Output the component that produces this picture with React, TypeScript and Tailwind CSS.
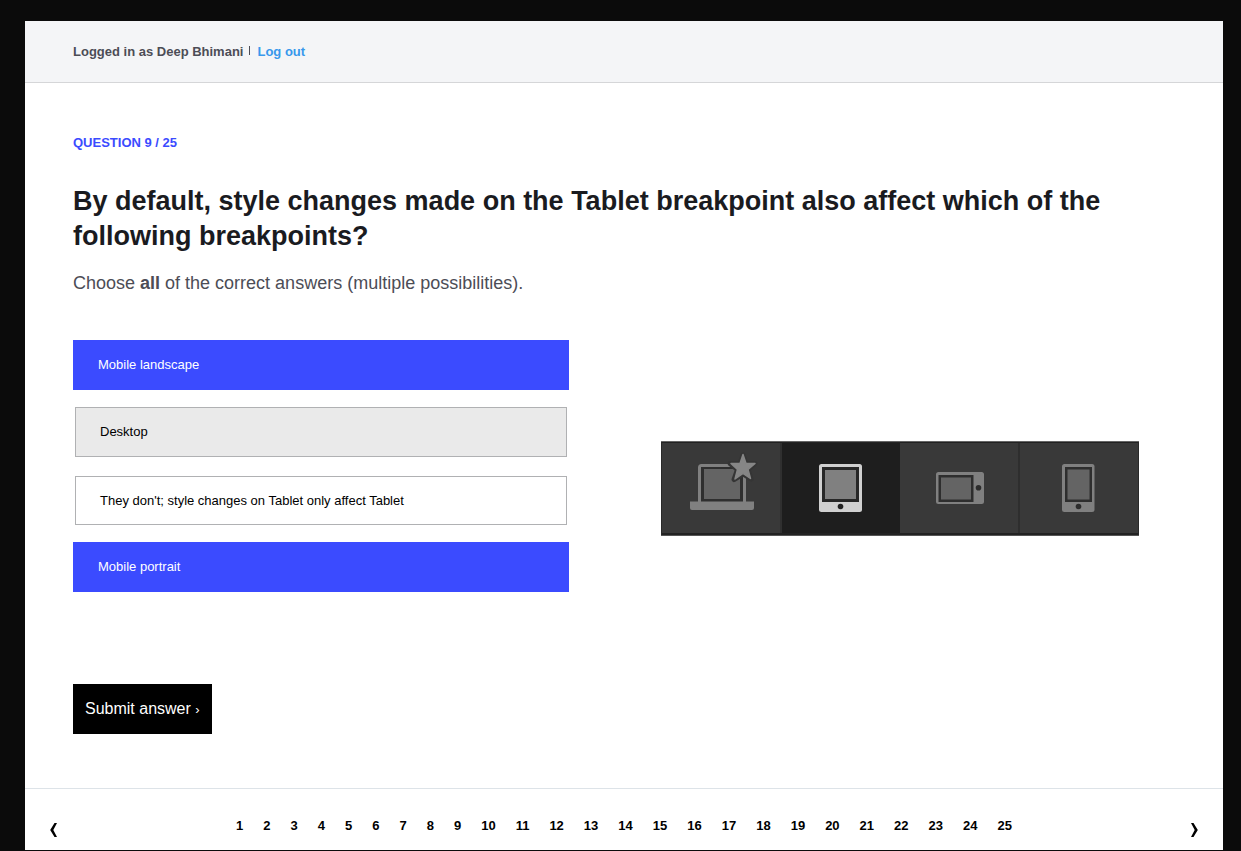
import { useState } from "react";

const OPTIONS = [
  "Mobile landscape",
  "Desktop",
  "They don't; style changes on Tablet only affect Tablet",
  "Mobile portrait",
];

const PAGES = Array.from({ length: 25 }, (_, i) => i + 1);

function BreakpointBar() {
  return (
    <svg
      viewBox="0 0 478 95"
      className="h-auto w-[478px] max-w-full"
      role="img"
      aria-label="Desktop, tablet, mobile landscape and mobile portrait breakpoints"
    >
      <rect width="478" height="95" fill="#393939" />
      <rect x="121" width="118" height="95" fill="#1e1e1e" />
      <rect x="119" width="2" height="95" fill="#303030" />
      <rect x="357" width="2" height="95" fill="#2e2e2e" />
      <rect width="478" height="2" fill="#222222" />
      <rect y="92" width="478" height="3" fill="#222222" />
      <rect width="1" height="95" fill="#292929" />
      <rect x="477" width="1" height="95" fill="#292929" />
      <rect width="478" height="1" fill="#666666" />
      <rect y="94" width="478" height="1" fill="#555555" />

      <path d="M37 61V26.500Q37 23 40.500 23H81.500Q85 23 85 26.500V61Z" fill="#808080" />
      <rect x="40" y="26" width="42" height="35" fill="#2f2f2f" />
      <rect x="43" y="28" width="36" height="30" fill="#646464" />
      <path
        d="M82 14L85 22.500H94L87 28.500L90 38L82 33L73 38.500L76.500 28.500L69 22.500H79Z"
        fill="#353535"
        stroke="#353535"
        strokeWidth="5"
        strokeLinejoin="round"
      />
      <path d="M29 60.500H93V67Q93 69 91 69H31Q29 69 29 67Z" fill="#808080" />
      <path
        d="M82 13.500L85 22.500H94L87 28.500L89.500 37.500L82 32.500L74 38L76.500 28.500L70 22.500H79Z"
        fill="#868686"
        stroke="#868686"
        strokeWidth="1.500"
        strokeLinejoin="round"
      />

      <rect x="158" y="23" width="43" height="48" rx="2.500" fill="#d0d0d0" />
      <rect x="161" y="26" width="37" height="35" fill="#272727" />
      <rect x="164" y="29" width="31" height="29" fill="#808080" />
      <circle cx="179.500" cy="65.500" r="2.800" fill="#222222" />

      <rect x="275" y="31" width="48" height="32" rx="2.500" fill="#808080" />
      <rect x="277.500" y="34" width="35" height="27" fill="#2e2e2e" />
      <rect x="280" y="36.500" width="30" height="22" fill="#646464" />
      <circle cx="317.500" cy="46.800" r="2.800" fill="#2c2c2c" />

      <rect x="401" y="23" width="32.500" height="48" rx="2.500" fill="#808080" />
      <rect x="404" y="26" width="27" height="35" fill="#2e2e2e" />
      <rect x="406.500" y="28.500" width="22" height="30" fill="#646464" />
      <circle cx="417.500" cy="65.500" r="2.800" fill="#2c2c2c" />
    </svg>
  );
}

export default function App() {
  const [selected, setSelected] = useState<number[]>([0, 3]);
  const [hovered, setHovered] = useState(1);

  const toggle = (index: number) =>
    setSelected((current) =>
      current.includes(index) ? current.filter((i) => i !== index) : [...current, index],
    );

  return (
    <div className="flex min-h-screen flex-col bg-[#0b0b0b] pt-[21px] pr-[18px] pb-px pl-[25px] font-['Liberation_Sans',Arial,sans-serif]">
      <div className="flex grow flex-col bg-white">
        <header className="flex h-[62px] items-center border-b border-[#d5d6d8] bg-[#f4f5f7] px-12 text-[13px] font-bold text-[#4c4d56]">
          <span>Logged in as Deep Bhimani</span>
          <span className="mr-[7px] mb-0.5 ml-1.5 h-[9px] w-px bg-[#4c4d56]" />
          <a href="#logout" className="text-[#3898ec]">
            Log out
          </a>
        </header>

        <main className="grow px-12 pt-[50px] pb-[54px]">
          <p className="text-[13px] leading-5 font-bold text-[#3b4bff]">QUESTION 9 / 25</p>
          <h1 className="mt-[31px] text-[27px] leading-[35px] font-bold text-[#1a1b1f]">
            By default, style changes made on the Tablet breakpoint also affect which of the following
            breakpoints?
          </h1>
          <p className="mt-[15px] text-lg leading-7 text-[#4c4d56]">
            Choose <strong>all</strong> of the correct answers (multiple possibilities).
          </p>

          <form onSubmit={(event) => event.preventDefault()}>
            <div className="mt-[43px] grid grid-cols-2 items-start">
              <div className="flex flex-col gap-[17px] pr-[55px]">
                {OPTIONS.map((option, index) => (
                  <label
                    key={option}
                    onMouseEnter={() => setHovered(index)}
                    className={
                      selected.includes(index)
                        ? "flex h-[50px] cursor-pointer items-center bg-[#3b4bff] px-[25px] text-[13px] text-white"
                        : hovered === index
                          ? "mx-0.5 flex h-[50px] cursor-pointer items-center border border-[#b0b1b3] bg-[#eaeaea] px-6 text-[13px] text-black"
                          : "mx-0.5 mt-0.5 flex h-[49px] cursor-pointer items-center border border-[#b0b1b3] bg-white px-6 text-[13px] text-black"
                    }
                  >
                    <input
                      type="checkbox"
                      className="sr-only"
                      checked={selected.includes(index)}
                      onChange={() => toggle(index)}
                    />
                    {option}
                  </label>
                ))}
              </div>
              <div className="flex justify-center pt-[101px]">
                <BreakpointBar />
              </div>
            </div>

            <button type="submit" className="mt-[92px] h-[50px] bg-black px-3 text-base text-white">
              Submit answer <span className="text-[13px]">›</span>
            </button>
          </form>
        </main>

        <nav
          aria-label="Questions"
          className="flex h-[62px] items-start justify-between border-t border-[#dde3e8] px-6 text-[13px] leading-5 font-bold text-black"
        >
          <button type="button" aria-label="Previous question" className="mt-[34px]">
            <svg width="10" height="14" viewBox="0 0 10 14" aria-hidden="true">
              <path d="M5.500 0H8L4.300 7L8 14H5.500L1.200 7Z" fill="black" />
            </svg>
          </button>
          <ol className="mt-[27px] flex gap-5">
            {PAGES.map((page) => (
              <li key={page}>
                <a href={`#question-${page}`}>{page}</a>
              </li>
            ))}
          </ol>
          <button type="button" aria-label="Next question" className="mt-[34px]">
            <svg width="10" height="14" viewBox="0 0 10 14" aria-hidden="true">
              <path d="M4.500 0H2L5.700 7L2 14H4.500L8.800 7Z" fill="black" />
            </svg>
          </button>
        </nav>
      </div>
    </div>
  );
}
